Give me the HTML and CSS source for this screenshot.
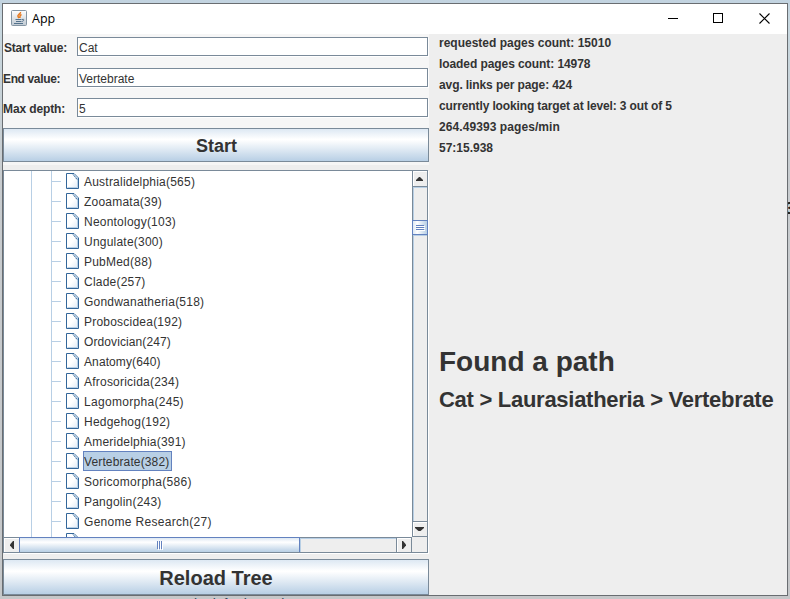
FILE: index.html
```html
<!DOCTYPE html>
<html lang="en">
<head>
<meta charset="utf-8">
<title>App</title>
<link rel="stylesheet" href="styles.css">
</head>
<body>
<svg width="0" height="0" class="defs"><defs>
<linearGradient id="leafShade" x1="0" y1="0" x2="1" y2="1"><stop offset=".5" stop-color="#fff"/><stop offset="1" stop-color="#dce8f5"/></linearGradient>
<symbol id="leaf" viewBox="0 0 13 16"><path d="M.5.5H8L12.500 5V15.500H.5Z" fill="url(#leafShade)" stroke="#336699"/><path d="M1.500 14.500H11.500V6" fill="none" stroke="#b8cfe5"/><path d="M7 1h1l4 4v2z" fill="#b8cfe5"/><path d="M7 1.500L11.500 7" stroke="#336699" stroke-dasharray="1.500 .7"/></symbol>
</defs></svg>
<span class="behind-digit">3</span>
<span class="behind-text">look for items in 100 t</span>
<div class="window">
<header class="titlebar">
<svg class="java" width="16" height="16" viewBox="0 0 16 16"><defs><linearGradient id="tile" x2="0" y2="1"><stop stop-color="#fff"/><stop offset="1" stop-color="#bfc9d2"/></linearGradient></defs><rect x=".5" y=".5" width="15" height="15" rx="1" fill="url(#tile)" stroke="#8495a3"/><path d="M9.500 2C10 4 6 4.500 7 6.500L8 8M10.500 4.500C8 5.500 9 6.500 9 8" fill="none" stroke="#e77a20" stroke-width="1.500"/><path d="M4.500 9.500h6M5 11.500h5M3 13.500h9M11 9.500c3-1 2 2-.5 2" fill="none" stroke="#54728c"/></svg>
<span class="title">App</span>
<svg class="controls" width="104" height="12" viewBox="0 0 104 12" fill="none" stroke="#000"><path d="M1 6.500H11"/><rect x="46.500" y="1.500" width="9" height="9"/><path d="M92.500 1.500L102.500 11.500M102.500 1.500L92.500 11.500" stroke-width="1.100"/></svg>
</header>
<main class="content">
<section class="left">
<div class="form">
<label class="field f1"><span class="caption s1">Start value:</span><span class="input">Cat</span></label>
<label class="field f2"><span class="caption s2">End value:</span><span class="input">Vertebrate</span></label>
<label class="field f3"><span class="caption s3">Max depth:</span><span class="input">5</span></label>
<button class="button start">Start</button>
</div>
<div class="scrollpane">
<div class="viewport"><ul class="tree">
<li><svg><use href="#leaf"/></svg><span>Australidelphia(565)</span></li>
<li><svg><use href="#leaf"/></svg><span>Zooamata(39)</span></li>
<li><svg><use href="#leaf"/></svg><span>Neontology(103)</span></li>
<li><svg><use href="#leaf"/></svg><span>Ungulate(300)</span></li>
<li><svg><use href="#leaf"/></svg><span>PubMed(88)</span></li>
<li><svg><use href="#leaf"/></svg><span>Clade(257)</span></li>
<li><svg><use href="#leaf"/></svg><span>Gondwanatheria(518)</span></li>
<li><svg><use href="#leaf"/></svg><span>Proboscidea(192)</span></li>
<li><svg><use href="#leaf"/></svg><span class="narrow">Ordovician(247)</span></li>
<li><svg><use href="#leaf"/></svg><span class="narrow">Anatomy(640)</span></li>
<li><svg><use href="#leaf"/></svg><span>Afrosoricida(234)</span></li>
<li><svg><use href="#leaf"/></svg><span class="wide">Lagomorpha(245)</span></li>
<li><svg><use href="#leaf"/></svg><span>Hedgehog(192)</span></li>
<li><svg><use href="#leaf"/></svg><span>Ameridelphia(391)</span></li>
<li><svg><use href="#leaf"/></svg><span class="selected">Vertebrate(382)</span></li>
<li><svg><use href="#leaf"/></svg><span class="wide">Soricomorpha(586)</span></li>
<li><svg><use href="#leaf"/></svg><span>Pangolin(243)</span></li>
<li><svg><use href="#leaf"/></svg><span class="wide">Genome Research(27)</span></li>
<li><svg><use href="#leaf"/></svg></li>
</ul></div>
<div class="vbar"><div class="arrow up"><svg width="7" height="4" viewBox="0 0 7 4"><path d="M3 0h1L7 3v1H0V3z"/></svg></div><div class="vtrack"></div><div class="vthumb"><i></i><i></i><i></i></div><div class="vtrack rest"></div><div class="arrow down"><svg width="9" height="4" viewBox="0 0 9 4"><path d="M0 0h9v1L5.500 4h-2L0 1z"/></svg></div></div>
<div class="hbar"><div class="arrow west"><svg width="4" height="8" viewBox="0 0 4 8"><path d="M3 0h1v8H3L0 4.500v-1z"/></svg></div><div class="hthumb"><i></i><i></i><i></i></div><div class="htrack"></div><div class="arrow east"><svg width="4" height="8" viewBox="0 0 4 8"><path d="M0 0h1l3 3.500v1L1 8H0z"/></svg></div></div>
<div class="corner"></div>
</div>
<button class="button reload">Reload Tree</button>
</section>
<section class="right">
<div class="stats"><p>requested pages count: 15010</p><p class="t2">loaded pages count: 14978</p><p class="t3">avg. links per page: 424</p><p class="t4">currently looking target at level: 3 out of 5</p><p class="t5">264.49393 pages/min</p><p>57:15.938</p></div>
<h1>Found a path</h1>
<h2>Cat &gt; Laurasiatheria &gt; Vertebrate</h2>
</section>
</main>
</div>
</body>
</html>
```
FILE: styles.css
```css
* { box-sizing: border-box; }
body { margin: 0; width: 790px; height: 599px; padding: 3px 2px; overflow: hidden; position: relative; font: 12px "Liberation Sans", Arial, sans-serif; color: #333; background: linear-gradient(#c2d3e0 0, #c8d8e0 20px, #c8cccf 180px, #c5c7c9); }
.defs { position: absolute; }
.behind-digit { position: absolute; left: 785px; top: 200px; font-weight: bold; font-size: 16px; color: #222; }
.behind-text { position: absolute; left: 194px; top: 596px; font-size: 14px; line-height: 16px; white-space: pre; color: #34465e; }
.window { position: relative; width: 786px; height: 593px; border: 1px solid #696d71; background: #eee; }
.titlebar { display: flex; align-items: center; height: 30px; padding: 0 16px 0 8px; background: #fff; }
.java { margin-top: -2px; }
.title { margin-left: 5px; margin-top: -1px; font: 12.5px "Open Sans", sans-serif; color: #000; }
.controls { margin-left: auto; margin-top: -2px; }
.content { display: flex; height: 561px; }
.left { width: 426px; }
.form { height: 131px; background: #f6f6f6; padding-top: 3px; }
.field { display: flex; height: 19px; }
.f2 { margin-top: 12px; }
.f3 { margin-top: 11px; }
.caption { width: 74px; font-weight: bold; line-height: 22px; white-space: nowrap; letter-spacing: -.2px; }
.s1 { padding-left: 1px; }
.s2 { letter-spacing: -.36px; }
.s3 { letter-spacing: -.12px; }
.input { width: 351px; height: 19px; border: 1px solid #7a8a99; background: #fff; box-shadow: 1px 1px #fff; padding-left: 1px; line-height: 20px; }
.button { display: block; width: 426px; border: 1px solid #7a8a99; margin: 0; padding: 0; background: linear-gradient(#dde8f3, #fff 32%, #fff 34%, #b8cfe5); color: #333; font: bold 18px "Liberation Sans", Arial, sans-serif; }
.start { height: 34px; margin-top: 11px; padding: 2px 0 0 1px; }
.reload { height: 36px; margin-top: 6px; padding-top: 2px; font-size: 20px; }
.scrollpane { display: grid; grid-template: 366px 15px / 408px 15px; width: 425px; height: 383px; margin-top: 5px; border: 1px solid #7a8a99; box-shadow: 1px 1px #fff; }
.viewport { overflow: hidden; background: #fff; }
.tree { margin: 0; padding: 0; list-style: none; background: linear-gradient(#b8cfe5, #b8cfe5) 27px 0 / 1px 100% no-repeat, linear-gradient(#b8cfe5, #b8cfe5) 47px 0 / 1px 100% no-repeat; }
.tree li { display: flex; height: 20px; padding-left: 62px; background: linear-gradient(#b8cfe5, #b8cfe5) 48px 10px / 9px 1px no-repeat; }
.tree svg { width: 13px; height: 16px; margin-top: 2px; flex: none; }
.tree span { height: 20px; margin-left: 4px; padding: 0 1px; line-height: 22px; letter-spacing: .22px; white-space: nowrap; }
.tree .narrow { letter-spacing: .1px; }
.tree .wide { letter-spacing: .3px; }
.tree .selected { letter-spacing: .13px; width: 89px; background: #b8cfe5; outline: 1px solid #6382bf; outline-offset: -1px; }
.vbar { display: flex; flex-direction: column; border-left: 1px solid #7a8a99; }
.arrow { display: flex; align-items: center; justify-content: center; fill: #333; background: #eee; box-shadow: inset 1px 1px #fff; flex: none; }
.up { height: 16px; padding-right: 1px; border-bottom: 1px solid #7a8a99; }
.vtrack { height: 33px; border-left: 1px solid #b8cfe5; border-top: 1px solid #b8cfe5; }
.vthumb { height: 15px; margin: 0 -1px; border: 1px solid #6382bf; background: linear-gradient(90deg, #dde8f3, #fff 30%, #b8cfe5); padding: 4px 3px 0 3px; }
.vthumb i { display: block; height: 1px; margin-bottom: 1px; background: #6382bf; box-shadow: 1px 1px #fff; }
.rest { height: 286px; }
.down { height: 16px; padding-right: 1px; border: solid #7a8a99; border-width: 1px 0; }
.hbar { display: flex; border-top: 1px solid #7a8a99; }
.west { width: 15px; }
.hthumb { display: flex; justify-content: center; width: 281px; margin-top: -1px; border: 1px solid #6382bf; border-bottom: 0; background: linear-gradient(#dde8f3, #fff 30%, #b8cfe5); padding-top: 3px; }
.hthumb i { width: 1px; height: 8px; margin-right: 1px; background: #6382bf; box-shadow: 1px 1px #fff; }
.htrack { flex: 1; border-top: 1px solid #b8cfe5; border-left: 1px solid #b8cfe5; }
.east { width: 16px; border: solid #7a8a99; border-width: 0 1px; }
.corner { background: #eee; }
.right { flex: 1; padding-left: 10px; white-space: nowrap; }
.stats { height: 126px; }
.stats p { height: 21px; margin: 0; line-height: 19px; font-weight: bold; }
.stats .t2 { letter-spacing: -.08px; }
.stats .t3 { letter-spacing: -.1px; }
.stats .t4 { letter-spacing: -.13px; }
.stats .t5 { letter-spacing: .08px; }
h1 { margin: 183px 0 0; font-size: 28px; line-height: 38px; }
h2 { margin: 0; font-size: 22px; line-height: 38px; letter-spacing: -.28px; }
```
